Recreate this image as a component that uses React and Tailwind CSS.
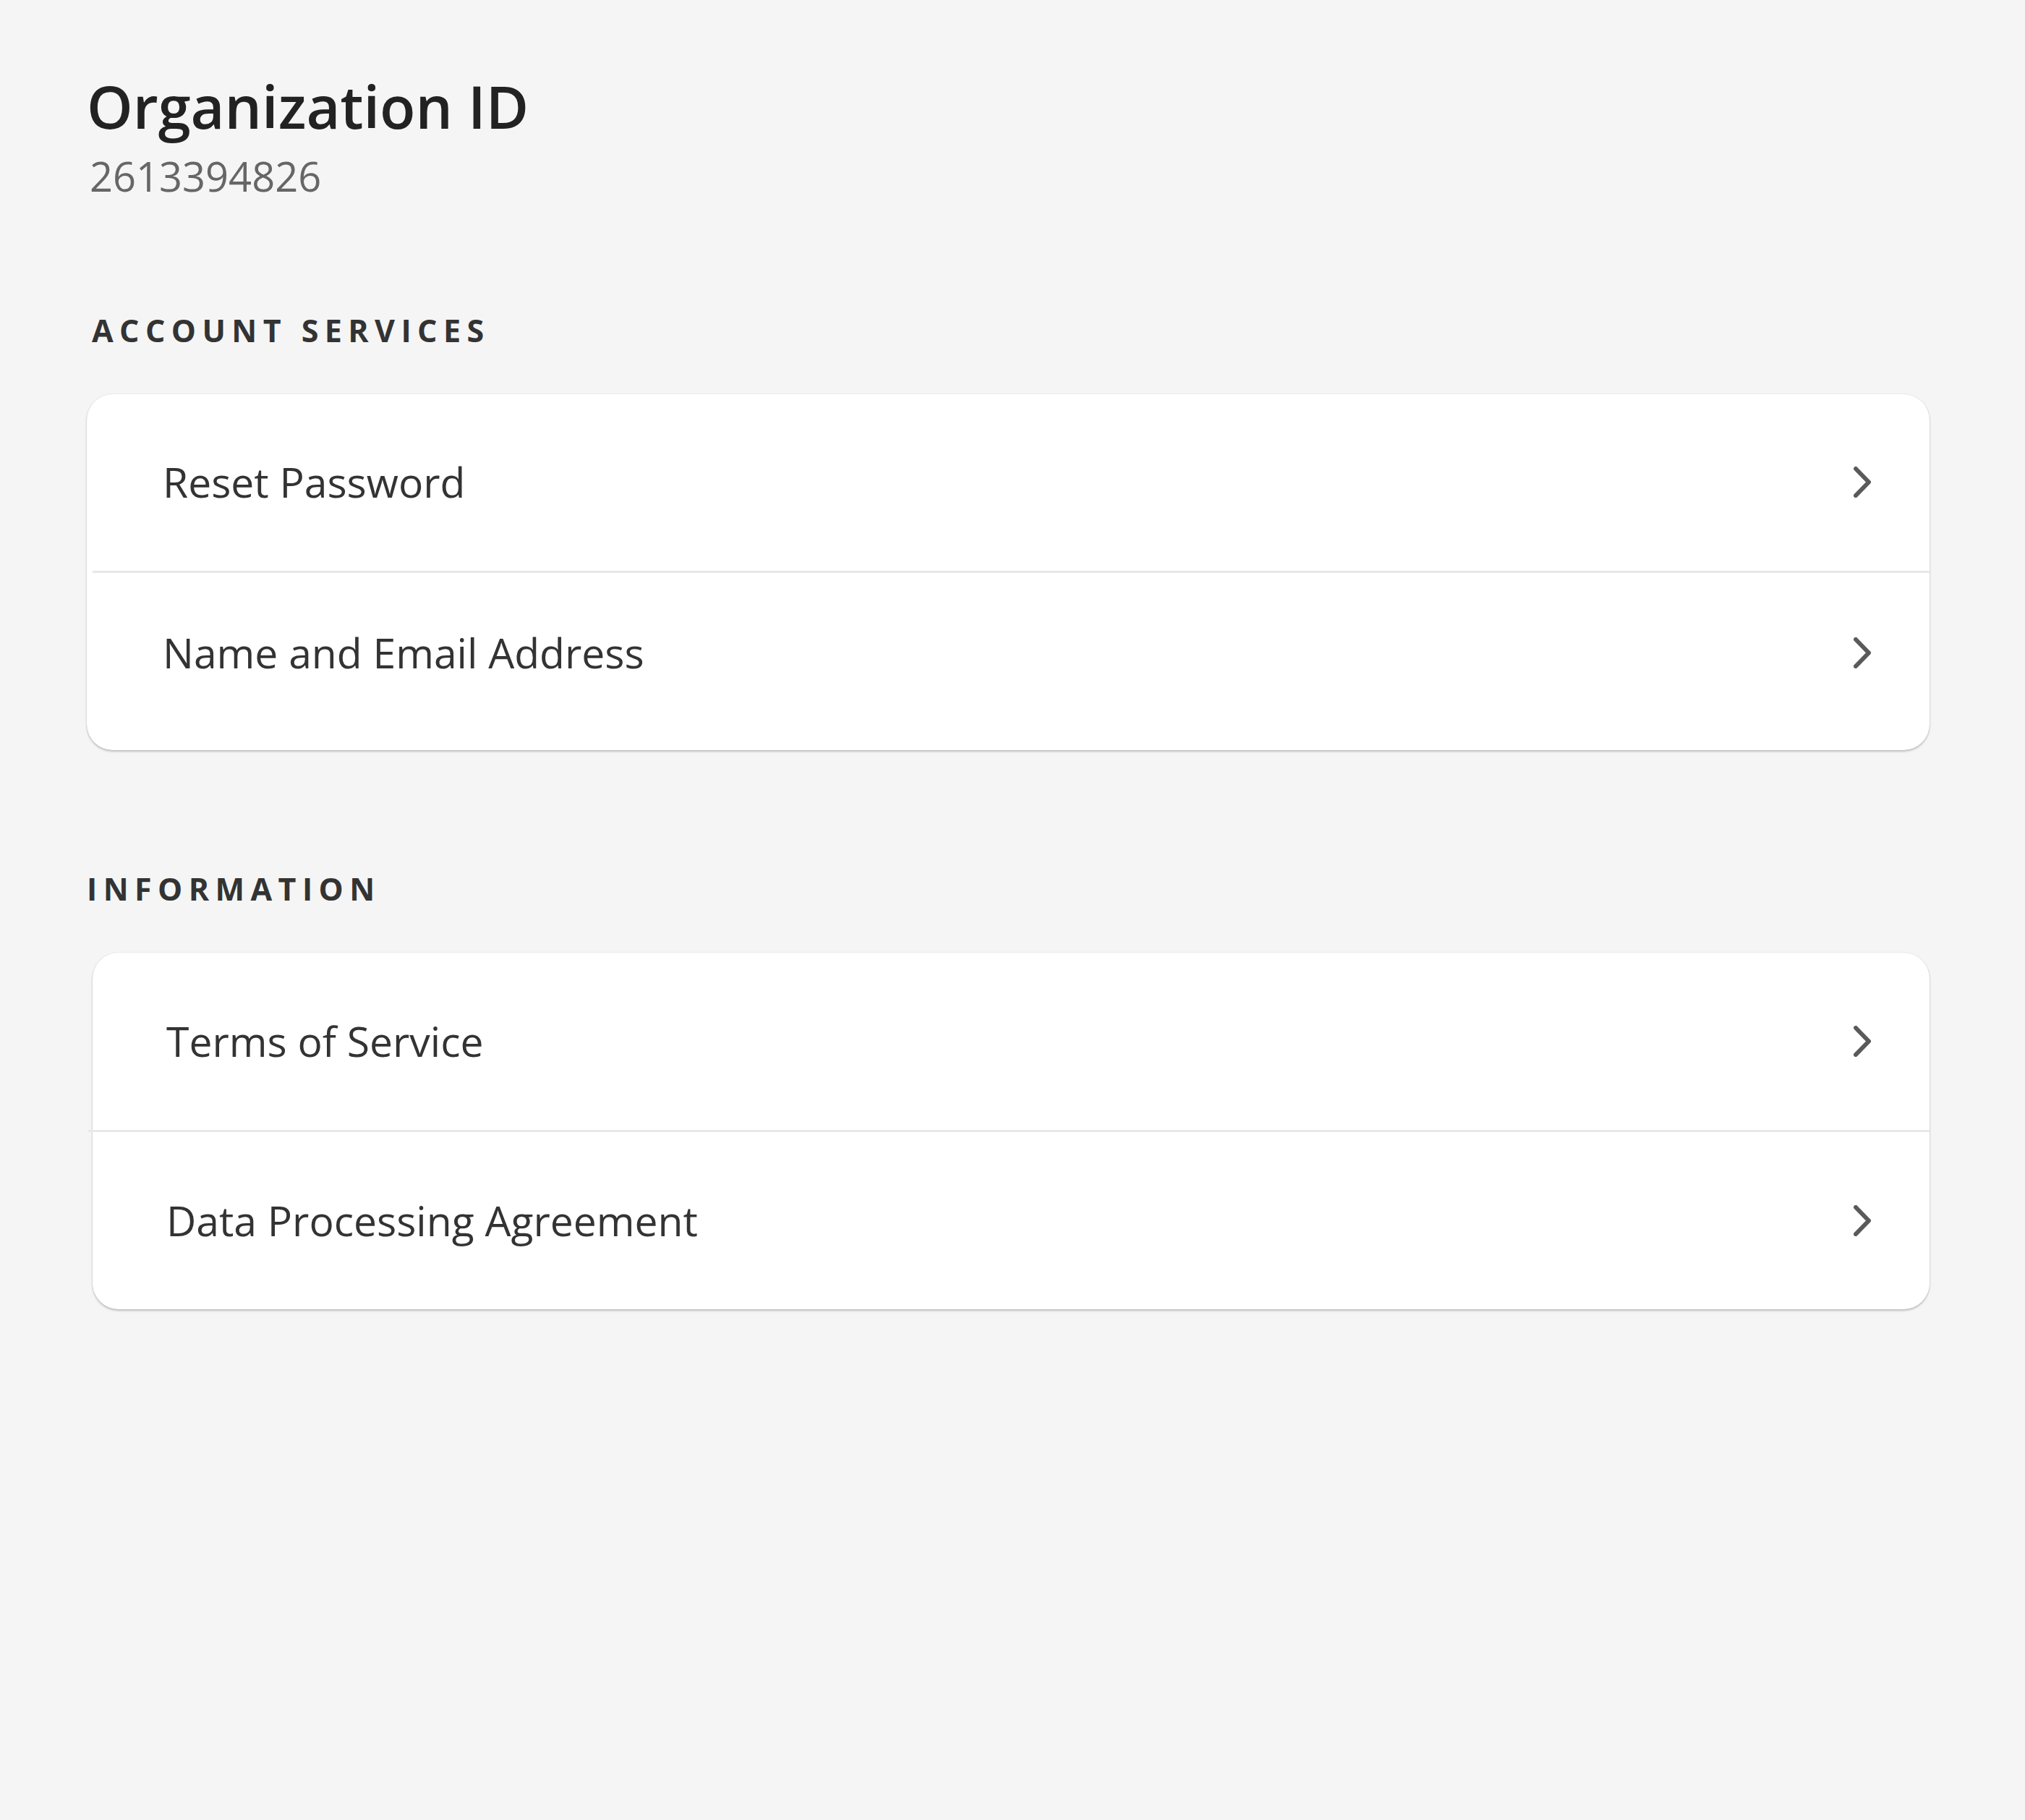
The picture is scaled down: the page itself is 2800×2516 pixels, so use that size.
import React from 'react';

const Chevron = () => (
  <svg width="24" height="43" viewBox="0 0 24 43" fill="none" stroke="#5a5a5a" strokeWidth="6" strokeLinecap="round" strokeLinejoin="round">
    <polyline points="3,3 21,21.5 3,40" />
  </svg>
);

function Row({ label, extra = 'h-[244px] pl-[105px]' }) {
  return (
    <div className={`flex items-center justify-between pr-[81px] ${extra}`}>
      <span className="text-[57px] leading-none text-[#333333]">{label}</span>
      <Chevron />
    </div>
  );
}

export default function App() {
  return (
    <div
      className="min-h-[2516px] bg-[#f5f5f5] pl-[120px] pr-[132px] pt-[106px]"
      style={{ fontFamily: '"Open Sans", "Noto Sans", sans-serif' }}
    >
      <h1 className="text-[81px] leading-none font-semibold text-[#222222]">Organization ID</h1>
      <p className="mt-[28px] ml-[4px] text-[56px] leading-none text-[#666666]">2613394826</p>

      {/* Account services */}
      <h2 className="mt-[164px] ml-[7px] text-[43px] leading-none font-bold tracking-[0.196em] text-[#333333]">
        ACCOUNT SERVICES
      </h2>
      <div className="mt-[67px] bg-white rounded-[36px] shadow-[0_2px_3px_rgba(0,0,0,0.22),0_0_2px_rgba(0,0,0,0.12)]">
        <Row label="Reset Password" extra="h-[244px] pl-[105px] pb-[2px]" />
        <div className="ml-2 h-[3px] bg-[#e8e8e8]" />
        <Row label="Name and Email Address" extra="h-[245px] pl-[105px] pb-6" />
      </div>

      {/* Information */}
      <h2 className="mt-[170px] text-[43px] leading-none font-bold tracking-[0.196em] text-[#333333]">
        INFORMATION
      </h2>
      <div className="mt-[67px] ml-2 bg-white rounded-[36px] shadow-[0_2px_3px_rgba(0,0,0,0.22),0_0_2px_rgba(0,0,0,0.12)]">
        <Row label="Terms of Service" extra="h-[245px] pl-[102px]" />
        <div className="-ml-[6px] h-[3px] bg-[#e8e8e8]" />
        <Row label="Data Processing Agreement" extra="h-[245px] pl-[102px]" />
      </div>
    </div>
  );
}
